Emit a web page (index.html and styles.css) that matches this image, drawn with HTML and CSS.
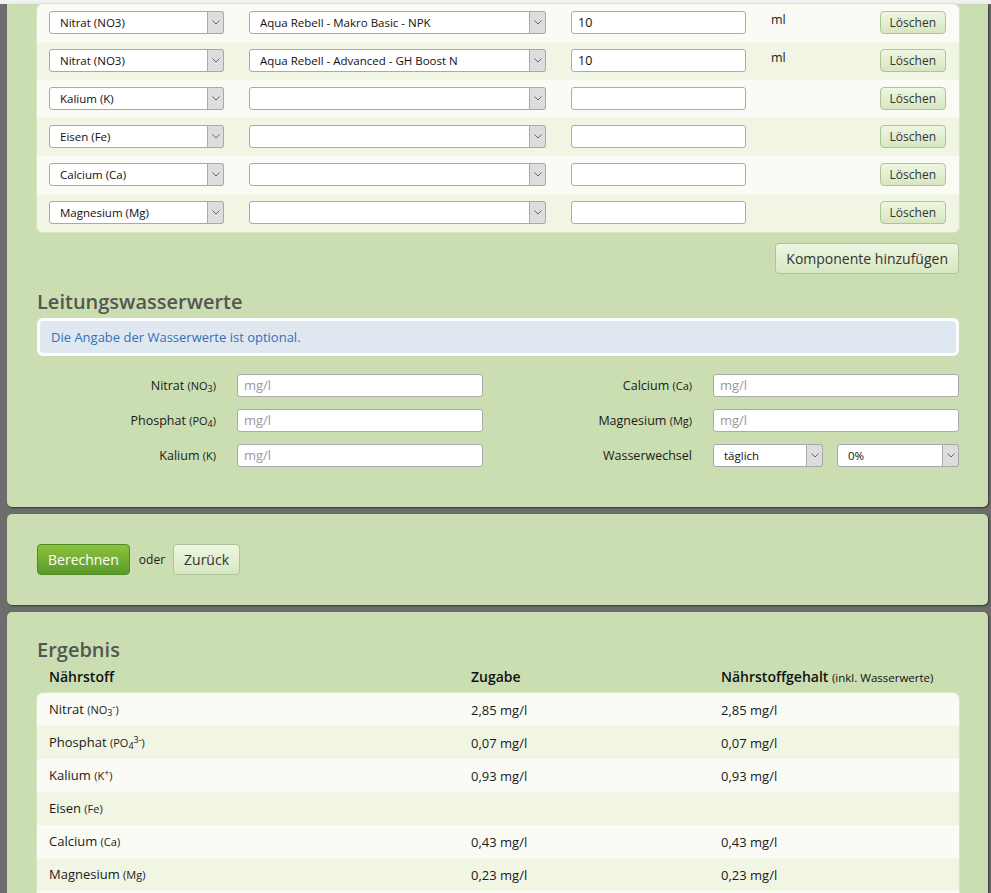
FILE: index.html
```html
<!DOCTYPE html>
<html lang="de">
<head>
<meta charset="utf-8">
<title>Dünger-Rechner</title>
<link rel="stylesheet" href="styles.css">
</head>
<body>
<div class="topbar"></div>
<main class="page">
  <section class="panel panel-first">
    <div class="components">
      <div class="comp-row">
        <div class="select-wrap"><select><option>Nitrat (NO3)</option></select><span class="arrow"><svg width="8" height="5" viewBox="0 0 8 5"><path d="M0.5 0.5 L4 4 L7.5 0.5" fill="none" stroke="#666" stroke-width="1"/></svg></span></div>
        <div class="select-wrap"><select><option>Aqua Rebell - Makro Basic - NPK</option></select><span class="arrow"><svg width="8" height="5" viewBox="0 0 8 5"><path d="M0.5 0.5 L4 4 L7.5 0.5" fill="none" stroke="#666" stroke-width="1"/></svg></span></div>
        <input class="text" type="text" value="10">
        <span class="unit">ml</span>
        <button class="btn btn-light btn-sm">Löschen</button>
      </div>
      <div class="comp-row">
        <div class="select-wrap"><select><option>Nitrat (NO3)</option></select><span class="arrow"><svg width="8" height="5" viewBox="0 0 8 5"><path d="M0.5 0.5 L4 4 L7.5 0.5" fill="none" stroke="#666" stroke-width="1"/></svg></span></div>
        <div class="select-wrap"><select><option>Aqua Rebell - Advanced - GH Boost N</option></select><span class="arrow"><svg width="8" height="5" viewBox="0 0 8 5"><path d="M0.5 0.5 L4 4 L7.5 0.5" fill="none" stroke="#666" stroke-width="1"/></svg></span></div>
        <input class="text" type="text" value="10">
        <span class="unit">ml</span>
        <button class="btn btn-light btn-sm">Löschen</button>
      </div>
      <div class="comp-row">
        <div class="select-wrap"><select><option>Kalium (K)</option></select><span class="arrow"><svg width="8" height="5" viewBox="0 0 8 5"><path d="M0.5 0.5 L4 4 L7.5 0.5" fill="none" stroke="#666" stroke-width="1"/></svg></span></div>
        <div class="select-wrap"><select><option></option></select><span class="arrow"><svg width="8" height="5" viewBox="0 0 8 5"><path d="M0.5 0.5 L4 4 L7.5 0.5" fill="none" stroke="#666" stroke-width="1"/></svg></span></div>
        <input class="text" type="text" value="">
        <span class="unit"></span>
        <button class="btn btn-light btn-sm">Löschen</button>
      </div>
      <div class="comp-row">
        <div class="select-wrap"><select><option>Eisen (Fe)</option></select><span class="arrow"><svg width="8" height="5" viewBox="0 0 8 5"><path d="M0.5 0.5 L4 4 L7.5 0.5" fill="none" stroke="#666" stroke-width="1"/></svg></span></div>
        <div class="select-wrap"><select><option></option></select><span class="arrow"><svg width="8" height="5" viewBox="0 0 8 5"><path d="M0.5 0.5 L4 4 L7.5 0.5" fill="none" stroke="#666" stroke-width="1"/></svg></span></div>
        <input class="text" type="text" value="">
        <span class="unit"></span>
        <button class="btn btn-light btn-sm">Löschen</button>
      </div>
      <div class="comp-row">
        <div class="select-wrap"><select><option>Calcium (Ca)</option></select><span class="arrow"><svg width="8" height="5" viewBox="0 0 8 5"><path d="M0.5 0.5 L4 4 L7.5 0.5" fill="none" stroke="#666" stroke-width="1"/></svg></span></div>
        <div class="select-wrap"><select><option></option></select><span class="arrow"><svg width="8" height="5" viewBox="0 0 8 5"><path d="M0.5 0.5 L4 4 L7.5 0.5" fill="none" stroke="#666" stroke-width="1"/></svg></span></div>
        <input class="text" type="text" value="">
        <span class="unit"></span>
        <button class="btn btn-light btn-sm">Löschen</button>
      </div>
      <div class="comp-row">
        <div class="select-wrap"><select><option>Magnesium (Mg)</option></select><span class="arrow"><svg width="8" height="5" viewBox="0 0 8 5"><path d="M0.5 0.5 L4 4 L7.5 0.5" fill="none" stroke="#666" stroke-width="1"/></svg></span></div>
        <div class="select-wrap"><select><option></option></select><span class="arrow"><svg width="8" height="5" viewBox="0 0 8 5"><path d="M0.5 0.5 L4 4 L7.5 0.5" fill="none" stroke="#666" stroke-width="1"/></svg></span></div>
        <input class="text" type="text" value="">
        <span class="unit"></span>
        <button class="btn btn-light btn-sm">Löschen</button>
      </div>
    </div>

    <div class="add-row">
      <button class="btn btn-light btn-md">Komponente hinzufügen</button>
    </div>

    <h2 class="heading">Leitungswasserwerte</h2>
    <div class="info">Die Angabe der Wasserwerte ist optional.</div>

    <div class="tap">
      <div class="tap-col">
        <label class="field"><span class="lbl">Nitrat <small>(NO<sub>3</sub>)</small></span><input class="text" type="text" placeholder="mg/l"></label>
        <label class="field"><span class="lbl">Phosphat <small>(PO<sub>4</sub>)</small></span><input class="text" type="text" placeholder="mg/l"></label>
        <label class="field"><span class="lbl">Kalium <small>(K)</small></span><input class="text" type="text" placeholder="mg/l"></label>
      </div>
      <div class="tap-col">
        <label class="field"><span class="lbl">Calcium <small>(Ca)</small></span><input class="text" type="text" placeholder="mg/l"></label>
        <label class="field"><span class="lbl">Magnesium <small>(Mg)</small></span><input class="text" type="text" placeholder="mg/l"></label>
        <div class="field"><span class="lbl">Wasserwechsel</span>
          <div class="pair">
            <div class="select-wrap sel-freq"><select><option>täglich</option></select><span class="arrow"><svg width="8" height="5" viewBox="0 0 8 5"><path d="M0.5 0.5 L4 4 L7.5 0.5" fill="none" stroke="#666" stroke-width="1"/></svg></span></div>
            <div class="select-wrap sel-pct"><select><option>0%</option></select><span class="arrow"><svg width="8" height="5" viewBox="0 0 8 5"><path d="M0.5 0.5 L4 4 L7.5 0.5" fill="none" stroke="#666" stroke-width="1"/></svg></span></div>
          </div>
        </div>
      </div>
    </div>
  </section>

  <section class="panel panel-actions">
    <button class="btn btn-primary btn-md">Berechnen</button>
    <span class="or">oder</span>
    <button class="btn btn-light btn-md">Zurück</button>
  </section>

  <section class="panel panel-result">
    <h2 class="heading">Ergebnis</h2>
    <div class="result-head">
      <span>Nährstoff</span>
      <span>Zugabe</span>
      <span>Nährstoffgehalt <small>(inkl. Wasserwerte)</small></span>
    </div>
    <div class="result-body">
      <div class="result-row"><span>Nitrat <small>(NO<sub>3</sub><sup>-</sup>)</small></span><span>2,85 mg/l</span><span>2,85 mg/l</span></div>
      <div class="result-row"><span>Phosphat <small>(PO<sub>4</sub><sup>3-</sup>)</small></span><span>0,07 mg/l</span><span>0,07 mg/l</span></div>
      <div class="result-row"><span>Kalium <small>(K<sup>+</sup>)</small></span><span>0,93 mg/l</span><span>0,93 mg/l</span></div>
      <div class="result-row"><span>Eisen <small>(Fe)</small></span><span></span><span></span></div>
      <div class="result-row"><span>Calcium <small>(Ca)</small></span><span>0,43 mg/l</span><span>0,43 mg/l</span></div>
      <div class="result-row"><span>Magnesium <small>(Mg)</small></span><span>0,23 mg/l</span><span>0,23 mg/l</span></div>
      <div class="result-row"><span></span><span></span><span></span></div>
    </div>
  </section>
</main>
</body>
</html>
```

FILE: styles.css
```css
* { box-sizing: border-box; }

html, body { margin: 0; padding: 0; }

body {
  background: #6d6d6d;
  font-family: "Open Sans", "Noto Sans", sans-serif;
  font-size: 13px;
  color: #1a1a1a;
}

.topbar {
  height: 4px;
  background: #f0f0f0;
}

.page {
  margin-left: 7px;
  width: 981px;
  display: flex;
  flex-direction: column;
  gap: 7px;
  padding-bottom: 20px;
}

.panel {
  background: #cbdeb1;
  border-radius: 5px;
  box-shadow: 1px 1px 2px rgba(0, 0, 0, 0.5);
  padding: 25px 29px 30px 30px;
}

.panel-first {
  border-radius: 0 0 5px 5px;
  padding: 0 29px 40px 30px;
}

/* components table */
.components {
  background: #fafbf5;
  border-radius: 6px;
  box-shadow: 0 0 0 1px #d9e5c6;
  overflow: hidden;
}

.comp-row {
  height: 38px;
  display: grid;
  grid-template-columns: 175px 297px 175px 1fr auto;
  column-gap: 25px;
  align-items: center;
  padding: 0 13px 2px 12px;
}

.comp-row:nth-child(even) { background: #f1f5e3; }

.unit {
  align-self: start;
  margin-top: 7px;
  font-size: 12.5px;
  line-height: 18px;
}

/* selects */
.select-wrap {
  position: relative;
  height: 23px;
}

.select-wrap select {
  -webkit-appearance: none;
  appearance: none;
  width: 100%;
  height: 100%;
  border: 1px solid #a9a9a9;
  border-radius: 3px;
  background: #fff;
  font-family: inherit;
  font-size: 11.5px;
  color: #111;
  padding: 0 20px 0 10px;
  margin: 0;
  outline: none;
}

.select-wrap .arrow {
  position: absolute;
  top: 0;
  right: 0;
  bottom: 0;
  width: 17px;
  background: #dddddd;
  border: 1px solid #a9a9a9;
  border-radius: 0 3px 3px 0;
  display: flex;
  align-items: center;
  justify-content: center;
  pointer-events: none;
}

/* text inputs */
.text {
  width: 100%;
  height: 23px;
  margin: 0;
  border: 1px solid #ababab;
  border-radius: 3px;
  background: #fff;
  padding: 0 6px;
  font-family: inherit;
  font-size: 12.5px;
  color: #111;
  outline: none;
}

.text::placeholder { color: #9a9a9a; font-size: 13px; }

/* buttons */
.btn {
  font-family: inherit;
  border-radius: 4px;
  cursor: pointer;
  margin: 0;
  white-space: nowrap;
}

.btn-light {
  background: linear-gradient(#eef7e2, #d6e7c1);
  border: 1px solid #aec397;
  color: #333;
}

.btn-primary {
  background: linear-gradient(#8dc23d, #5b9a2a);
  border: 1px solid #4e8b26;
  color: #fff;
}

.btn-sm {
  height: 23px;
  padding: 0 9px;
  font-size: 12px;
}

.btn-md {
  height: 31px;
  padding: 0 10px;
  font-size: 14px;
}

.add-row {
  display: flex;
  justify-content: flex-end;
  margin-top: 11px;
}

/* headings */
.heading {
  margin: 16px 0 4px;
  font-size: 20px;
  font-weight: 600;
  line-height: 24px;
  color: #555;
}

.panel-result { padding-top: 26px; }
.panel-result .heading { margin: 0; }

.info {
  border: 3px solid #fff;
  border-radius: 6px;
  background: #dfe8f0;
  color: #3570b8;
  padding: 7px 11px;
  font-size: 13px;
  line-height: 18px;
}

/* tap water form */
.tap {
  display: grid;
  grid-template-columns: 1fr 1fr;
  column-gap: 30px;
  margin-top: 18px;
}

.tap-col {
  display: flex;
  flex-direction: column;
  gap: 12px;
}

.field {
  display: grid;
  grid-template-columns: 179px 1fr;
  column-gap: 21px;
  align-items: center;
}

.field .lbl {
  text-align: right;
  font-size: 12.5px;
  line-height: 18px;
}

small { font-size: 11px; }

sub, sup {
  font-size: 9px;
  line-height: 0;
}

sub { vertical-align: -2px; }
sup { vertical-align: 4px; }

.pair {
  display: flex;
  gap: 14px;
}

.sel-freq { width: 110px; }
.sel-pct { flex: 1; }

/* actions */
.panel-actions {
  display: flex;
  align-items: center;
  padding: 30px;
}

.or {
  margin: 0 8px 0 9px;
  font-size: 12px;
}

/* result */
.result-head,
.result-row {
  display: grid;
  grid-template-columns: 422px 250px 1fr;
  padding: 0 12px;
}

.result-head {
  padding-top: 5px;
  padding-bottom: 5px;
  font-size: 14px;
  font-weight: 600;
  line-height: 20px;
  color: #111;
}

.result-head small {
  font-size: 11.5px;
  font-weight: 400;
}

.result-body {
  background: #fafbf5;
  border-radius: 6px;
  box-shadow: 0 0 0 1px #d9e5c6;
  overflow: hidden;
}

.result-row {
  height: 33px;
  align-items: center;
  font-size: 13px;
  line-height: 18px;
}

.result-row:nth-child(even) { background: #f1f5e3; }
```
